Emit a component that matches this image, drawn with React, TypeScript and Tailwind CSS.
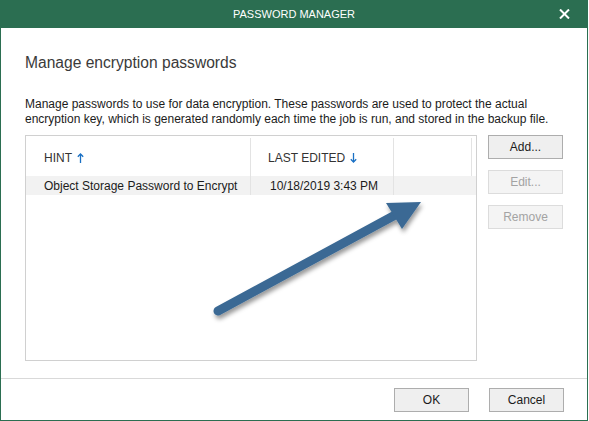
import React from "react";

const font = { fontFamily: '"Liberation Sans", Arial, sans-serif' };

function SortArrow({ dir }: { dir: "up" | "down" }) {
  return (
    <svg width="7" height="10" viewBox="0 0 7 10" className="ml-[5px]">
      {dir === "up" ? (
        <g stroke="#1a70c4" strokeWidth="1.3" fill="none">
          <line x1="3.5" y1="1" x2="3.5" y2="10" />
          <polyline points="0.8,3.8 3.5,1 6.2,3.8" />
        </g>
      ) : (
        <g stroke="#1a70c4" strokeWidth="1.3" fill="none">
          <line x1="3.5" y1="0" x2="3.5" y2="9" />
          <polyline points="0.8,6.2 3.5,9 6.2,6.2" />
        </g>
      )}
    </svg>
  );
}

function Btn({ label, disabled }: { label: string; disabled?: boolean }) {
  return (
    <div
      className={
        "w-[75px] h-[24px] flex items-center justify-center text-[12px] border " +
        (disabled
          ? "bg-[#f4f4f4] border-[#dcdcdc] text-[#a3a3a3]"
          : "bg-[#efefef] border-[#adadad] text-[#1b1b1b]")
      }
    >
      {label}
    </div>
  );
}

export default function App() {
  return (
    <div className="relative w-[589px] h-[421px] bg-white" style={font}>
      <div className="w-[588px] h-[421px] flex flex-col border-x border-b border-[#2b6e51]">
        {/* title bar */}
        <div className="relative h-[28px] -mx-px bg-[#2b6e51] flex items-center justify-center text-white text-[11px]">
          PASSWORD MANAGER
          <svg
            width="11"
            height="10"
            viewBox="0 0 11 10"
            className="absolute left-[559px] top-[9px]"
          >
            <g stroke="white" strokeWidth="2">
              <line x1="1" y1="0.5" x2="10" y2="9.5" />
              <line x1="10" y1="0.5" x2="1" y2="9.5" />
            </g>
          </svg>
        </div>

        {/* body */}
        <div className="h-[350px] pl-[24px] pt-[25px] flex flex-col">
          <div className="text-[15.6px] leading-[20px] text-[#3a3a3a]">
            Manage encryption passwords
          </div>
          <div className="mt-[24px] text-[12px] leading-[15px] text-[#1b1b1b]">
            Manage passwords to use for data encryption. These passwords are used to protect the actual
            <br />
            encryption key, which is generated randomly each time the job is run, and stored in the backup file.
          </div>
          <div className="mt-[8px] flex gap-[11px]">
            {/* password list */}
            <div className="w-[452px] h-[226px] border border-[#d0d0d0] flex flex-col">
              <div className="h-[40px] flex text-[12px] text-[#333]">
                <div className="w-[225px] flex items-center pl-[18px] pt-[2px] border-r border-[#e3e3e3] mt-[2px]">
                  HINT
                  <SortArrow dir="up" />
                </div>
                <div className="w-[143px] flex items-center pl-[17px] pt-[2px] border-r border-[#e3e3e3] mt-[2px]">
                  LAST EDITED
                  <SortArrow dir="down" />
                </div>
                <div className="w-[78px] border-r border-[#e3e3e3] mt-[2px]" />
              </div>
              <div className="h-[19px] flex bg-[#f2f2f2] text-[12px] text-[#1b1b1b]">
                <div className="w-[225px] flex items-center pl-[18px] border-r border-[#e3e3e3]">
                  Object Storage Password to Encrypt
                </div>
                <div className="w-[143px] flex items-center pl-[19px] border-r border-[#e3e3e3]">
                  10/18/2019 3:43 PM
                </div>
              </div>
            </div>
            <div className="flex flex-col gap-[11px]">
              <Btn label="Add..." />
              <Btn label="Edit..." disabled />
              <Btn label="Remove" disabled />
            </div>
          </div>
        </div>

        {/* footer */}
        <div className="flex-1 border-t border-[#d9d9d9] flex justify-end items-start pt-[9px] pr-[23px] gap-[20px]">
          <Btn label="OK" />
          <Btn label="Cancel" />
        </div>
      </div>

      {/* annotation arrow */}
      <svg
        className="absolute inset-0 pointer-events-none"
        width="589"
        height="421"
        viewBox="0 0 589 421"
      >
        <defs>
          <filter id="sh" x="-20%" y="-20%" width="140%" height="140%">
            <feDropShadow dx="1.5" dy="3.5" stdDeviation="2" floodColor="#000" floodOpacity="0.4" />
          </filter>
        </defs>
        <g filter="url(#sh)" fill="#3a6994">
          <line x1="218" y1="311" x2="397" y2="214" stroke="#3a6994" strokeWidth="9" strokeLinecap="round" />
          <polygon points="421,202 386,203 402,229" />
        </g>
      </svg>
    </div>
  );
}
